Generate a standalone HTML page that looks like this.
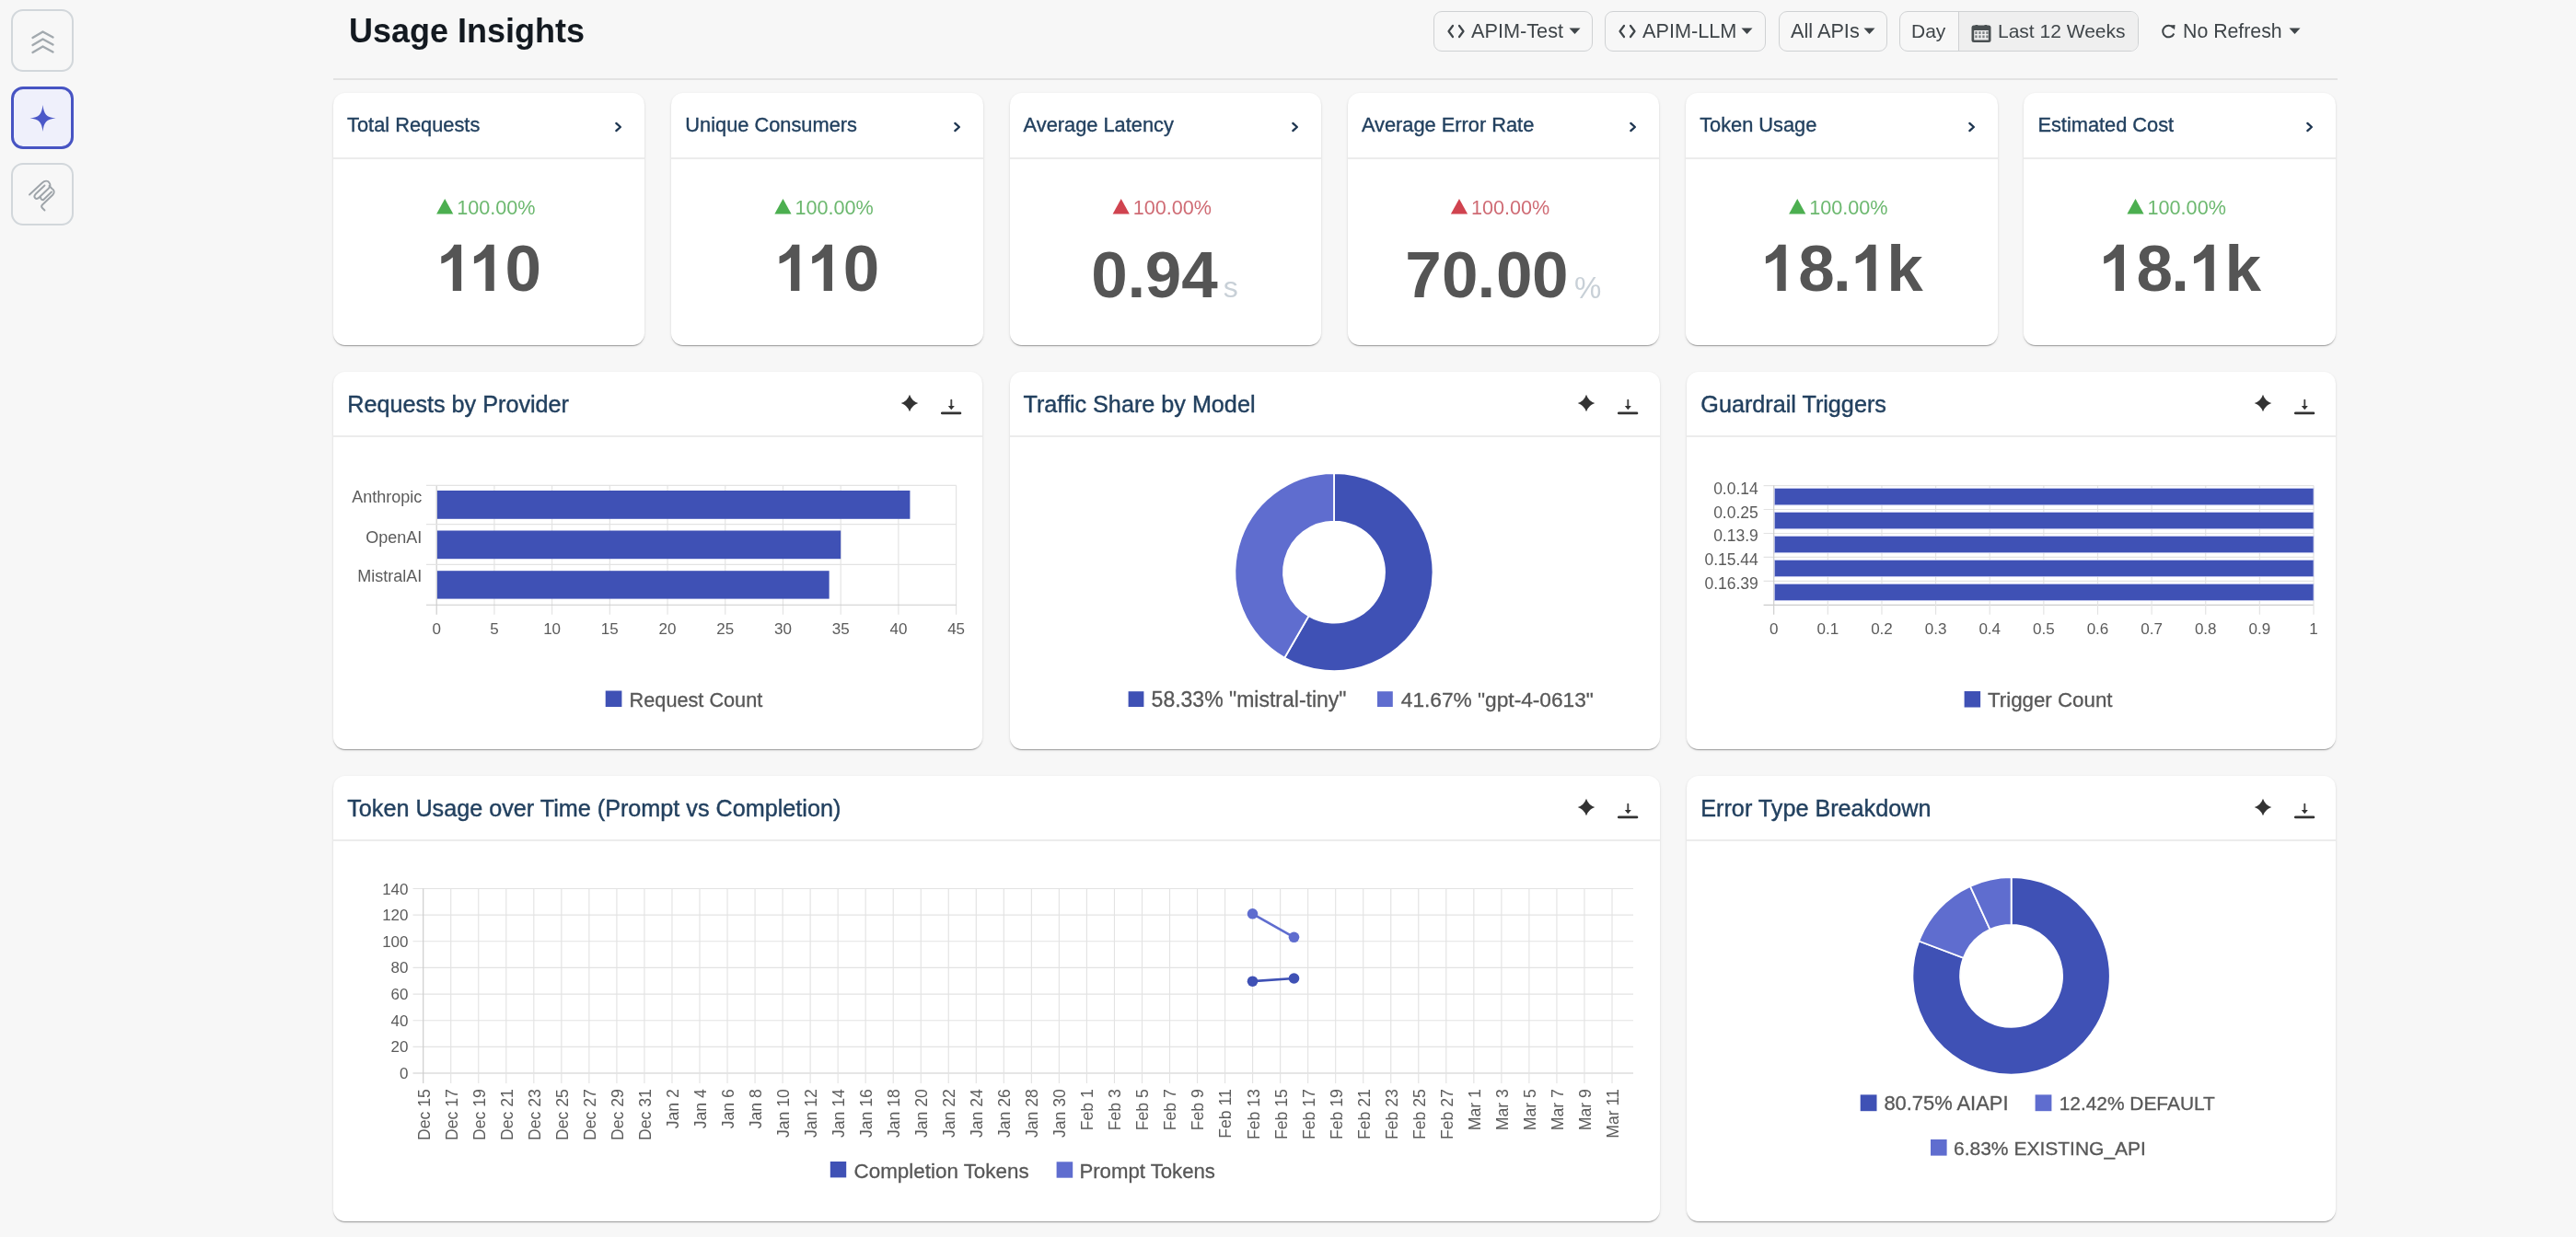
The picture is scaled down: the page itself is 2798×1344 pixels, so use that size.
<!DOCTYPE html><html><head><meta charset="utf-8"><style>
*{margin:0;padding:0;box-sizing:border-box}
html,body{width:2798px;height:1344px;overflow:hidden;background:#f7f7f7;font-family:"Liberation Sans", sans-serif}
.abs{position:absolute}
.sb{position:absolute;left:12px;width:68px;height:68px;border:2px solid #d2d7db;border-radius:13px}
.sb.act{border:3px solid #4754c3;background:#eff0fb}
.title{position:absolute;left:379px;top:9.5px;font-size:36px;font-weight:bold;color:#131920;line-height:48px;white-space:nowrap}
.hdiv{position:absolute;left:362.3px;top:84.8px;width:2176.3px;height:2px;background:#e3e3e3}
.fb{position:absolute;top:12px;height:44px;border:1.5px solid #cfd1d3;border-radius:9px;color:#3f4549;font-size:21px;line-height:41px;white-space:nowrap}
.card{position:absolute;background:#fff;border-radius:13px;box-shadow:0 2px 1px -1px rgba(0,0,0,0.2),0 1px 1px 0 rgba(0,0,0,0.14),0 1px 3px 0 rgba(0,0,0,0.12)}
.chd{position:absolute;left:0;right:0;height:2px;background:#ececec}
.kt{position:absolute;left:15px;font-size:21.8px;color:#22405f;-webkit-text-stroke:0.35px #22405f;white-space:nowrap;line-height:28px}
.ct{position:absolute;left:15px;font-size:25.2px;color:#22405f;-webkit-text-stroke:0.4px #22405f;white-space:nowrap;line-height:32px}
.num{position:absolute;font-weight:bold;color:#585858;white-space:nowrap}
.unit{color:#c9d1d8;font-weight:normal}
svg text{font-family:"Liberation Sans", sans-serif}
</style></head><body><div id="root" style="position:absolute;left:0;top:0;width:2798px;height:1344px;will-change:transform">
<div class="sb" style="top:10px"></div>
<div class="sb act" style="top:94px"></div>
<div class="sb" style="top:177px"></div>
<svg class="abs" style="left:0;top:0" width="100" height="260">
<g fill="none" stroke="#a2a9ae" stroke-width="2.4" stroke-linecap="round" stroke-linejoin="round">
<path d="M35.5 41 L46.5 34.5 L57.5 40.5"/>
<path d="M35.5 49 L46.5 42.5 L57.5 48.5"/>
<path d="M35.5 57 L46.5 50.5 L57.5 56.5"/>
</g>
<path d="M46.5 114 C47.6 124 50.5 127.6 60.5 128.6 C50.5 129.6 47.6 133 46.5 143 C45.4 133 42.5 129.6 32.5 128.6 C42.5 127.6 45.4 124 46.5 114 Z" fill="#4b58c8"/>
<g fill="none" stroke="#9ea4a9" stroke-width="1.9" stroke-linecap="round" stroke-linejoin="round">
<path d="M32 211.5 L46 198.5 C48.5 196 52 196 53.5 198.5 C55 200.5 54.5 203 52.5 205 L42.5 214.5 C41 216 39 216 38 215 C37 214 37.5 212 39 210.5 L48.5 201.5"/>
<path d="M53.5 202 L56.5 205 C59 206.5 59.5 209 57.5 211.5 L46 222.5 C45 223.5 45 225 46 226 L48.5 228.5"/>
<path d="M44 214 C44 216 45 217.2 47 217.2 L56 208.5"/>
</g>
</svg>
<div class="title">Usage Insights</div>
<div class="hdiv"></div>
<div class="fb" style="left:1557px;width:173px"></div>
<svg class="abs" style="left:1572px;top:26px" width="20" height="16"><path d="M6 2 L1.5 8 L6 14 M13 2 L17.5 8 L13 14" fill="none" stroke="#3f4549" stroke-width="2.2" stroke-linecap="round" stroke-linejoin="round"/></svg>
<div class="abs" style="left:1598px;top:12px;font-size:21.7px;color:#3f4549;line-height:44px">APIM-Test</div>
<svg class="abs" style="left:1704px;top:30px" width="14" height="8"><path d="M0.5 0.5 L12.5 0.5 L6.5 7 Z" fill="#3f4549"/></svg>
<div class="fb" style="left:1743px;width:175px"></div>
<svg class="abs" style="left:1758px;top:26px" width="20" height="16"><path d="M6 2 L1.5 8 L6 14 M13 2 L17.5 8 L13 14" fill="none" stroke="#3f4549" stroke-width="2.2" stroke-linecap="round" stroke-linejoin="round"/></svg>
<div class="abs" style="left:1784px;top:12px;font-size:21.7px;color:#3f4549;line-height:44px">APIM-LLM</div>
<svg class="abs" style="left:1891px;top:30px" width="14" height="8"><path d="M0.5 0.5 L12.5 0.5 L6.5 7 Z" fill="#3f4549"/></svg>
<div class="fb" style="left:1932px;width:118px"></div>
<div class="abs" style="left:1945px;top:12px;font-size:21.7px;color:#3f4549;line-height:44px">All APIs</div>
<svg class="abs" style="left:2024px;top:30px" width="14" height="8"><path d="M0.5 0.5 L12.5 0.5 L6.5 7 Z" fill="#3f4549"/></svg>
<div class="fb" style="left:2063px;width:260px;overflow:hidden"><div class="abs" style="left:63px;top:0;width:200px;height:44px;background:#efefef;border-left:1.5px solid #cfd1d3"></div></div>
<div class="abs" style="left:2076px;top:12px;font-size:21px;color:#3f4549;line-height:44px">Day</div>
<svg class="abs" style="left:2140px;top:24px" width="26" height="24">
<rect x="1.5" y="3.5" width="21" height="18.5" rx="2.5" fill="#4a5052"/>
<rect x="4.2" y="9" width="15.6" height="10.5" fill="#efefef"/>
<rect x="5.5" y="3" width="2.8" height="3" fill="#4a5052"/><rect x="15.5" y="3" width="2.8" height="3" fill="#4a5052"/>
<g fill="#7d8284"><rect x="5.3" y="10.2" width="2.3" height="2.8"/><rect x="9.3" y="10.2" width="2.3" height="2.8"/><rect x="13.3" y="10.2" width="2.3" height="2.8"/><rect x="17.3" y="10.2" width="2.3" height="2.8"/>
<rect x="5.3" y="14.4" width="2.3" height="2.8"/><rect x="9.3" y="14.4" width="2.3" height="2.8"/><rect x="13.3" y="14.4" width="2.3" height="2.8"/><rect x="17.3" y="14.4" width="2.3" height="2.8"/></g>
</svg>
<div class="abs" style="left:2170px;top:12px;font-size:21px;color:#3f4549;line-height:44px">Last 12 Weeks</div>
<svg class="abs" style="left:2346px;top:24px" width="20" height="20">
<path d="M14.5 6.2 A6.3 6.3 0 1 0 15.3 12.5" fill="none" stroke="#3f4549" stroke-width="2"/>
<path d="M11.5 3.5 L16.5 3 L16 8.5 Z" fill="#3f4549"/>
</svg>
<div class="abs" style="left:2371px;top:12px;font-size:21.3px;color:#3f4549;line-height:44px">No Refresh</div>
<svg class="abs" style="left:2486px;top:30px" width="14" height="8"><path d="M0.5 0.5 L12.5 0.5 L6.5 7 Z" fill="#3f4549"/></svg>
<div class="card" style="left:362.10px;top:101px;width:338.4px;height:274px">
<div class="chd" style="top:70px"></div>
<div class="kt" style="top:21px">Total Requests</div>
<svg class="abs" style="left:304.4px;top:30px" width="12" height="14"><path d="M3.3 2.9 L7.9 7 L3.3 11.1" fill="none" stroke="#1d3550" stroke-width="2.3" stroke-linecap="round" stroke-linejoin="round"/></svg>
</div>
<div class="card" style="left:729.36px;top:101px;width:338.4px;height:274px">
<div class="chd" style="top:70px"></div>
<div class="kt" style="top:21px">Unique Consumers</div>
<svg class="abs" style="left:304.4px;top:30px" width="12" height="14"><path d="M3.3 2.9 L7.9 7 L3.3 11.1" fill="none" stroke="#1d3550" stroke-width="2.3" stroke-linecap="round" stroke-linejoin="round"/></svg>
</div>
<div class="card" style="left:1096.62px;top:101px;width:338.4px;height:274px">
<div class="chd" style="top:70px"></div>
<div class="kt" style="top:21px">Average Latency</div>
<svg class="abs" style="left:304.4px;top:30px" width="12" height="14"><path d="M3.3 2.9 L7.9 7 L3.3 11.1" fill="none" stroke="#1d3550" stroke-width="2.3" stroke-linecap="round" stroke-linejoin="round"/></svg>
</div>
<div class="card" style="left:1463.88px;top:101px;width:338.4px;height:274px">
<div class="chd" style="top:70px"></div>
<div class="kt" style="top:21px">Average Error Rate</div>
<svg class="abs" style="left:304.4px;top:30px" width="12" height="14"><path d="M3.3 2.9 L7.9 7 L3.3 11.1" fill="none" stroke="#1d3550" stroke-width="2.3" stroke-linecap="round" stroke-linejoin="round"/></svg>
</div>
<div class="card" style="left:1831.14px;top:101px;width:338.4px;height:274px">
<div class="chd" style="top:70px"></div>
<div class="kt" style="top:21px">Token Usage</div>
<svg class="abs" style="left:304.4px;top:30px" width="12" height="14"><path d="M3.3 2.9 L7.9 7 L3.3 11.1" fill="none" stroke="#1d3550" stroke-width="2.3" stroke-linecap="round" stroke-linejoin="round"/></svg>
</div>
<div class="card" style="left:2198.40px;top:101px;width:338.4px;height:274px">
<div class="chd" style="top:70px"></div>
<div class="kt" style="top:21px">Estimated Cost</div>
<svg class="abs" style="left:304.4px;top:30px" width="12" height="14"><path d="M3.3 2.9 L7.9 7 L3.3 11.1" fill="none" stroke="#1d3550" stroke-width="2.3" stroke-linecap="round" stroke-linejoin="round"/></svg>
</div>
<div class="card" style="left:362.20px;top:403.8px;width:705.30px;height:410px">
<div class="chd" style="top:69px"></div>
<div class="ct" style="top:19px">Requests by Provider</div>
<svg class="abs" style="left:613.8px;top:22.700000000000003px" width="24" height="24"><path d="M12 2.6999999999999993 Q14.3 9.7 21.3 12 Q14.3 14.3 12 21.3 Q9.7 14.3 2.6999999999999993 12 Q9.7 9.7 12 2.6999999999999993 Z" fill="#333"/></svg>
<svg class="abs" style="left:659.8px;top:28.5px" width="24" height="20"><path d="M11.3 2.8 L11.3 9.5" stroke="#444" stroke-width="1.9" fill="none" stroke-linecap="round"/><path d="M7.8 9 L14.8 9 L11.3 13.2 Z" fill="#333"/><path d="M1.3 16.9 L20.9 16.9" stroke="#333" stroke-width="2.8" fill="none" stroke-linecap="round"/></svg>
</div>
<div class="card" style="left:1096.50px;top:403.8px;width:706.30px;height:410px">
<div class="chd" style="top:69px"></div>
<div class="ct" style="top:19px">Traffic Share by Model</div>
<svg class="abs" style="left:614.8px;top:22.700000000000003px" width="24" height="24"><path d="M12 2.6999999999999993 Q14.3 9.7 21.3 12 Q14.3 14.3 12 21.3 Q9.7 14.3 2.6999999999999993 12 Q9.7 9.7 12 2.6999999999999993 Z" fill="#333"/></svg>
<svg class="abs" style="left:660.8px;top:28.5px" width="24" height="20"><path d="M11.3 2.8 L11.3 9.5" stroke="#444" stroke-width="1.9" fill="none" stroke-linecap="round"/><path d="M7.8 9 L14.8 9 L11.3 13.2 Z" fill="#333"/><path d="M1.3 16.9 L20.9 16.9" stroke="#333" stroke-width="2.8" fill="none" stroke-linecap="round"/></svg>
</div>
<div class="card" style="left:1832.30px;top:403.8px;width:705.20px;height:410px">
<div class="chd" style="top:69px"></div>
<div class="ct" style="top:19px">Guardrail Triggers</div>
<svg class="abs" style="left:613.7px;top:22.700000000000003px" width="24" height="24"><path d="M12 2.6999999999999993 Q14.3 9.7 21.3 12 Q14.3 14.3 12 21.3 Q9.7 14.3 2.6999999999999993 12 Q9.7 9.7 12 2.6999999999999993 Z" fill="#333"/></svg>
<svg class="abs" style="left:659.7px;top:28.5px" width="24" height="20"><path d="M11.3 2.8 L11.3 9.5" stroke="#444" stroke-width="1.9" fill="none" stroke-linecap="round"/><path d="M7.8 9 L14.8 9 L11.3 13.2 Z" fill="#333"/><path d="M1.3 16.9 L20.9 16.9" stroke="#333" stroke-width="2.8" fill="none" stroke-linecap="round"/></svg>
</div>
<div class="card" style="left:362.20px;top:842.6px;width:1440.50px;height:484.2px">
<div class="chd" style="top:69px"></div>
<div class="ct" style="top:19px">Token Usage over Time (Prompt vs Completion)</div>
<svg class="abs" style="left:1349.0px;top:22.700000000000003px" width="24" height="24"><path d="M12 2.6999999999999993 Q14.3 9.7 21.3 12 Q14.3 14.3 12 21.3 Q9.7 14.3 2.6999999999999993 12 Q9.7 9.7 12 2.6999999999999993 Z" fill="#333"/></svg>
<svg class="abs" style="left:1395.0px;top:28.5px" width="24" height="20"><path d="M11.3 2.8 L11.3 9.5" stroke="#444" stroke-width="1.9" fill="none" stroke-linecap="round"/><path d="M7.8 9 L14.8 9 L11.3 13.2 Z" fill="#333"/><path d="M1.3 16.9 L20.9 16.9" stroke="#333" stroke-width="2.8" fill="none" stroke-linecap="round"/></svg>
</div>
<div class="card" style="left:1832.30px;top:842.6px;width:705.20px;height:484.2px">
<div class="chd" style="top:69px"></div>
<div class="ct" style="top:19px">Error Type Breakdown</div>
<svg class="abs" style="left:613.7px;top:22.700000000000003px" width="24" height="24"><path d="M12 2.6999999999999993 Q14.3 9.7 21.3 12 Q14.3 14.3 12 21.3 Q9.7 14.3 2.6999999999999993 12 Q9.7 9.7 12 2.6999999999999993 Z" fill="#333"/></svg>
<svg class="abs" style="left:659.7px;top:28.5px" width="24" height="20"><path d="M11.3 2.8 L11.3 9.5" stroke="#444" stroke-width="1.9" fill="none" stroke-linecap="round"/><path d="M7.8 9 L14.8 9 L11.3 13.2 Z" fill="#333"/><path d="M1.3 16.9 L20.9 16.9" stroke="#333" stroke-width="2.8" fill="none" stroke-linecap="round"/></svg>
</div>
<svg class="abs" style="left:0;top:0" width="2798" height="400"><path transform="translate(491.80 265.70)" d="M1.4 0 L9.3 0 L9.3 50.3 L0 50.3 L0 13.8 C-3.5 17 -8 19.8 -12.5 20.9 L-12.5 12.7 C-6 10.5 -1 5.5 1.4 0 Z" fill="#555555"/><path transform="translate(527.40 265.70)" d="M1.4 0 L9.3 0 L9.3 50.3 L0 50.3 L0 13.8 C-3.5 17 -8 19.8 -12.5 20.9 L-12.5 12.7 C-6 10.5 -1 5.5 1.4 0 Z" fill="#555555"/><text x="548.39" y="316" font-size="71" font-weight="bold" fill="#555555">0</text><path transform="translate(859.06 265.70)" d="M1.4 0 L9.3 0 L9.3 50.3 L0 50.3 L0 13.8 C-3.5 17 -8 19.8 -12.5 20.9 L-12.5 12.7 C-6 10.5 -1 5.5 1.4 0 Z" fill="#555555"/><path transform="translate(894.66 265.70)" d="M1.4 0 L9.3 0 L9.3 50.3 L0 50.3 L0 13.8 C-3.5 17 -8 19.8 -12.5 20.9 L-12.5 12.7 C-6 10.5 -1 5.5 1.4 0 Z" fill="#555555"/><text x="915.65" y="316" font-size="71" font-weight="bold" fill="#555555">0</text><text x="1185.29 1224.58 1243.84 1283.23" y="323.3" font-size="71" font-weight="bold" fill="#555555">0.94</text><text x="1328.7" y="322.7" font-size="32" fill="#c8d0d7">s</text><text x="1526.25 1566.09 1604.48 1625.09 1663.89" y="323.3" font-size="71" font-weight="bold" fill="#555555">70.00</text><text x="1709.9" y="323.5" font-size="33" fill="#c8d0d7">%</text><path transform="translate(1930.40 265.70)" d="M1.4 0 L9.3 0 L9.3 50.3 L0 50.3 L0 13.8 C-3.5 17 -8 19.8 -12.5 20.9 L-12.5 12.7 C-6 10.5 -1 5.5 1.4 0 Z" fill="#555555"/><path transform="translate(2028.20 265.70)" d="M1.4 0 L9.3 0 L9.3 50.3 L0 50.3 L0 13.8 C-3.5 17 -8 19.8 -12.5 20.9 L-12.5 12.7 C-6 10.5 -1 5.5 1.4 0 Z" fill="#555555"/><text x="1953.25 1991.08 2049.14" y="316" font-size="71" font-weight="bold" fill="#555555">8.k</text><path transform="translate(2297.66 265.70)" d="M1.4 0 L9.3 0 L9.3 50.3 L0 50.3 L0 13.8 C-3.5 17 -8 19.8 -12.5 20.9 L-12.5 12.7 C-6 10.5 -1 5.5 1.4 0 Z" fill="#555555"/><path transform="translate(2395.46 265.70)" d="M1.4 0 L9.3 0 L9.3 50.3 L0 50.3 L0 13.8 C-3.5 17 -8 19.8 -12.5 20.9 L-12.5 12.7 C-6 10.5 -1 5.5 1.4 0 Z" fill="#555555"/><text x="2320.51 2358.34 2416.40" y="316" font-size="71" font-weight="bold" fill="#555555">8.k</text><path d="M483.20 216 L492.30 232.6 L474.10 232.6 Z" fill="#4caf50"/><text x="496.30" y="233" font-size="21.6" fill="#6cb86f">100.00%</text><path d="M850.46 216 L859.56 232.6 L841.36 232.6 Z" fill="#4caf50"/><text x="863.56" y="233" font-size="21.6" fill="#6cb86f">100.00%</text><path d="M1217.72 216 L1226.82 232.6 L1208.62 232.6 Z" fill="#d0434f"/><text x="1230.82" y="233" font-size="21.6" fill="#cf6b74">100.00%</text><path d="M1584.98 216 L1594.08 232.6 L1575.88 232.6 Z" fill="#d0434f"/><text x="1598.08" y="233" font-size="21.6" fill="#cf6b74">100.00%</text><path d="M1952.24 216 L1961.34 232.6 L1943.14 232.6 Z" fill="#4caf50"/><text x="1965.34" y="233" font-size="21.6" fill="#6cb86f">100.00%</text><path d="M2319.50 216 L2328.60 232.6 L2310.40 232.6 Z" fill="#4caf50"/><text x="2332.60" y="233" font-size="21.6" fill="#6cb86f">100.00%</text></svg>
<svg class="abs" style="left:0;top:0" width="2798" height="1344"><line x1="474.20" y1="527.3" x2="474.20" y2="667.7" stroke="#cccccc" stroke-width="1.15"/><line x1="536.91" y1="527.3" x2="536.91" y2="667.7" stroke="#e3e3e3" stroke-width="1.15"/><line x1="599.62" y1="527.3" x2="599.62" y2="667.7" stroke="#e3e3e3" stroke-width="1.15"/><line x1="662.33" y1="527.3" x2="662.33" y2="667.7" stroke="#e3e3e3" stroke-width="1.15"/><line x1="725.04" y1="527.3" x2="725.04" y2="667.7" stroke="#e3e3e3" stroke-width="1.15"/><line x1="787.76" y1="527.3" x2="787.76" y2="667.7" stroke="#e3e3e3" stroke-width="1.15"/><line x1="850.47" y1="527.3" x2="850.47" y2="667.7" stroke="#e3e3e3" stroke-width="1.15"/><line x1="913.18" y1="527.3" x2="913.18" y2="667.7" stroke="#e3e3e3" stroke-width="1.15"/><line x1="975.89" y1="527.3" x2="975.89" y2="667.7" stroke="#e3e3e3" stroke-width="1.15"/><line x1="1038.60" y1="527.3" x2="1038.60" y2="667.7" stroke="#e3e3e3" stroke-width="1.15"/><line x1="463" y1="527.3" x2="1038.6" y2="527.3" stroke="#e3e3e3" stroke-width="1.15"/><line x1="463" y1="569.6" x2="1038.6" y2="569.6" stroke="#e3e3e3" stroke-width="1.15"/><line x1="463" y1="613.4" x2="1038.6" y2="613.4" stroke="#e3e3e3" stroke-width="1.15"/><line x1="463" y1="657.2" x2="1038.6" y2="657.2" stroke="#cccccc" stroke-width="1.15"/><rect x="474.9" y="533.0" width="513.53" height="30.80" fill="#3f51b5"/><text x="458.3" y="545.6" font-size="18" fill="#5b5b5b" text-anchor="end">Anthropic</text><rect x="474.9" y="576.5" width="438.28" height="30.70" fill="#3f51b5"/><text x="458.3" y="589.5" font-size="18" fill="#5b5b5b" text-anchor="end">OpenAI</text><rect x="474.9" y="620.2" width="425.74" height="30.40" fill="#3f51b5"/><text x="458.3" y="632" font-size="18" fill="#5b5b5b" text-anchor="end">MistralAI</text><text x="474.20" y="688.9" font-size="17" fill="#5b5b5b" text-anchor="middle">0</text><text x="536.91" y="688.9" font-size="17" fill="#5b5b5b" text-anchor="middle">5</text><text x="599.62" y="688.9" font-size="17" fill="#5b5b5b" text-anchor="middle">10</text><text x="662.33" y="688.9" font-size="17" fill="#5b5b5b" text-anchor="middle">15</text><text x="725.04" y="688.9" font-size="17" fill="#5b5b5b" text-anchor="middle">20</text><text x="787.76" y="688.9" font-size="17" fill="#5b5b5b" text-anchor="middle">25</text><text x="850.47" y="688.9" font-size="17" fill="#5b5b5b" text-anchor="middle">30</text><text x="913.18" y="688.9" font-size="17" fill="#5b5b5b" text-anchor="middle">35</text><text x="975.89" y="688.9" font-size="17" fill="#5b5b5b" text-anchor="middle">40</text><text x="1038.60" y="688.9" font-size="17" fill="#5b5b5b" text-anchor="middle">45</text><rect x="657.7" y="750.5" width="17.7" height="17.5" fill="#3f51b5"/><text x="683.6" y="767.9" font-size="21.7" fill="#575757" stroke="#575757" stroke-width="0.3">Request Count</text><path d="M1449.00 514.10 A107.5 107.5 0 1 1 1395.27 714.71 L1421.51 669.24 A55 55 0 1 0 1449.00 566.60 Z" fill="#3f51b5" stroke="#fff" stroke-width="1.8" stroke-linejoin="miter"/><path d="M1395.27 714.71 A107.5 107.5 0 0 1 1449.00 514.10 L1449.00 566.60 A55 55 0 0 0 1421.51 669.24 Z" fill="#5f6dcf" stroke="#fff" stroke-width="1.8" stroke-linejoin="miter"/><rect x="1225.6" y="751.2" width="16.8" height="16.8" fill="#3f51b5"/><text x="1250.6" y="767.9" font-size="23" fill="#575757" stroke="#575757" stroke-width="0.3">58.33% "mistral-tiny"</text><rect x="1496" y="751.2" width="16.8" height="16.8" fill="#5f6dcf"/><text x="1521.8" y="767.9" font-size="22.7" fill="#575757" stroke="#575757" stroke-width="0.3">41.67% "gpt-4-0613"</text><line x1="1915.6" y1="527.60" x2="2513" y2="527.60" stroke="#e3e3e3" stroke-width="1.15"/><line x1="1915.6" y1="553.54" x2="2513" y2="553.54" stroke="#e3e3e3" stroke-width="1.15"/><line x1="1915.6" y1="579.48" x2="2513" y2="579.48" stroke="#e3e3e3" stroke-width="1.15"/><line x1="1915.6" y1="605.42" x2="2513" y2="605.42" stroke="#e3e3e3" stroke-width="1.15"/><line x1="1915.6" y1="631.36" x2="2513" y2="631.36" stroke="#e3e3e3" stroke-width="1.15"/><line x1="1915.6" y1="657.30" x2="2513" y2="657.30" stroke="#cccccc" stroke-width="1.15"/><line x1="1926.70" y1="527.6" x2="1926.70" y2="667.8" stroke="#cccccc" stroke-width="1.15"/><line x1="1985.33" y1="527.6" x2="1985.33" y2="667.8" stroke="#e3e3e3" stroke-width="1.15"/><line x1="2043.96" y1="527.6" x2="2043.96" y2="667.8" stroke="#e3e3e3" stroke-width="1.15"/><line x1="2102.59" y1="527.6" x2="2102.59" y2="667.8" stroke="#e3e3e3" stroke-width="1.15"/><line x1="2161.22" y1="527.6" x2="2161.22" y2="667.8" stroke="#e3e3e3" stroke-width="1.15"/><line x1="2219.85" y1="527.6" x2="2219.85" y2="667.8" stroke="#e3e3e3" stroke-width="1.15"/><line x1="2278.48" y1="527.6" x2="2278.48" y2="667.8" stroke="#e3e3e3" stroke-width="1.15"/><line x1="2337.11" y1="527.6" x2="2337.11" y2="667.8" stroke="#e3e3e3" stroke-width="1.15"/><line x1="2395.74" y1="527.6" x2="2395.74" y2="667.8" stroke="#e3e3e3" stroke-width="1.15"/><line x1="2454.37" y1="527.6" x2="2454.37" y2="667.8" stroke="#e3e3e3" stroke-width="1.15"/><line x1="2513.00" y1="527.6" x2="2513.00" y2="667.8" stroke="#e3e3e3" stroke-width="1.15"/><rect x="1927.3" y="530.60" width="585.70" height="18.2" fill="#3f51b5" stroke="#c9cdf0" stroke-width="0.8"/><text x="1909.8" y="536.60" font-size="17.5" fill="#5b5b5b" text-anchor="end">0.0.14</text><rect x="1927.3" y="556.54" width="585.70" height="18.2" fill="#3f51b5" stroke="#c9cdf0" stroke-width="0.8"/><text x="1909.8" y="562.54" font-size="17.5" fill="#5b5b5b" text-anchor="end">0.0.25</text><rect x="1927.3" y="582.48" width="585.70" height="18.2" fill="#3f51b5" stroke="#c9cdf0" stroke-width="0.8"/><text x="1909.8" y="588.48" font-size="17.5" fill="#5b5b5b" text-anchor="end">0.13.9</text><rect x="1927.3" y="608.42" width="585.70" height="18.2" fill="#3f51b5" stroke="#c9cdf0" stroke-width="0.8"/><text x="1909.8" y="614.42" font-size="17.5" fill="#5b5b5b" text-anchor="end">0.15.44</text><rect x="1927.3" y="634.36" width="585.70" height="18.2" fill="#3f51b5" stroke="#c9cdf0" stroke-width="0.8"/><text x="1909.8" y="640.36" font-size="17.5" fill="#5b5b5b" text-anchor="end">0.16.39</text><text x="1926.70" y="689" font-size="17" fill="#5b5b5b" text-anchor="middle">0</text><text x="1985.33" y="689" font-size="17" fill="#5b5b5b" text-anchor="middle">0.1</text><text x="2043.96" y="689" font-size="17" fill="#5b5b5b" text-anchor="middle">0.2</text><text x="2102.59" y="689" font-size="17" fill="#5b5b5b" text-anchor="middle">0.3</text><text x="2161.22" y="689" font-size="17" fill="#5b5b5b" text-anchor="middle">0.4</text><text x="2219.85" y="689" font-size="17" fill="#5b5b5b" text-anchor="middle">0.5</text><text x="2278.48" y="689" font-size="17" fill="#5b5b5b" text-anchor="middle">0.6</text><text x="2337.11" y="689" font-size="17" fill="#5b5b5b" text-anchor="middle">0.7</text><text x="2395.74" y="689" font-size="17" fill="#5b5b5b" text-anchor="middle">0.8</text><text x="2454.37" y="689" font-size="17" fill="#5b5b5b" text-anchor="middle">0.9</text><text x="2513.00" y="689" font-size="17" fill="#5b5b5b" text-anchor="middle">1</text><rect x="2133.6" y="751" width="17.5" height="17.5" fill="#3f51b5"/><text x="2159" y="768" font-size="22.3" fill="#575757" stroke="#575757" stroke-width="0.3">Trigger Count</text><line x1="448.5" y1="965.50" x2="1774" y2="965.50" stroke="#e3e3e3" stroke-width="1.15"/><text x="443.5" y="971.50" font-size="17" fill="#5b5b5b" text-anchor="end">140</text><line x1="448.5" y1="994.14" x2="1774" y2="994.14" stroke="#e3e3e3" stroke-width="1.15"/><text x="443.5" y="1000.14" font-size="17" fill="#5b5b5b" text-anchor="end">120</text><line x1="448.5" y1="1022.79" x2="1774" y2="1022.79" stroke="#e3e3e3" stroke-width="1.15"/><text x="443.5" y="1028.79" font-size="17" fill="#5b5b5b" text-anchor="end">100</text><line x1="448.5" y1="1051.43" x2="1774" y2="1051.43" stroke="#e3e3e3" stroke-width="1.15"/><text x="443.5" y="1057.43" font-size="17" fill="#5b5b5b" text-anchor="end">80</text><line x1="448.5" y1="1080.07" x2="1774" y2="1080.07" stroke="#e3e3e3" stroke-width="1.15"/><text x="443.5" y="1086.07" font-size="17" fill="#5b5b5b" text-anchor="end">60</text><line x1="448.5" y1="1108.71" x2="1774" y2="1108.71" stroke="#e3e3e3" stroke-width="1.15"/><text x="443.5" y="1114.71" font-size="17" fill="#5b5b5b" text-anchor="end">40</text><line x1="448.5" y1="1137.36" x2="1774" y2="1137.36" stroke="#e3e3e3" stroke-width="1.15"/><text x="443.5" y="1143.36" font-size="17" fill="#5b5b5b" text-anchor="end">20</text><line x1="448.5" y1="1166.00" x2="1774" y2="1166.00" stroke="#cccccc" stroke-width="1.15"/><text x="443.5" y="1172.00" font-size="17" fill="#5b5b5b" text-anchor="end">0</text><line x1="459.70" y1="965.5" x2="459.70" y2="1177" stroke="#cccccc" stroke-width="1.15"/><text transform="translate(466.60 1183.2) rotate(-90)" font-size="17.6" fill="#5b5b5b" text-anchor="end">Dec 15</text><line x1="489.73" y1="965.5" x2="489.73" y2="1177" stroke="#e3e3e3" stroke-width="1.15"/><text transform="translate(496.63 1183.2) rotate(-90)" font-size="17.6" fill="#5b5b5b" text-anchor="end">Dec 17</text><line x1="519.76" y1="965.5" x2="519.76" y2="1177" stroke="#e3e3e3" stroke-width="1.15"/><text transform="translate(526.66 1183.2) rotate(-90)" font-size="17.6" fill="#5b5b5b" text-anchor="end">Dec 19</text><line x1="549.79" y1="965.5" x2="549.79" y2="1177" stroke="#e3e3e3" stroke-width="1.15"/><text transform="translate(556.69 1183.2) rotate(-90)" font-size="17.6" fill="#5b5b5b" text-anchor="end">Dec 21</text><line x1="579.82" y1="965.5" x2="579.82" y2="1177" stroke="#e3e3e3" stroke-width="1.15"/><text transform="translate(586.72 1183.2) rotate(-90)" font-size="17.6" fill="#5b5b5b" text-anchor="end">Dec 23</text><line x1="609.85" y1="965.5" x2="609.85" y2="1177" stroke="#e3e3e3" stroke-width="1.15"/><text transform="translate(616.75 1183.2) rotate(-90)" font-size="17.6" fill="#5b5b5b" text-anchor="end">Dec 25</text><line x1="639.88" y1="965.5" x2="639.88" y2="1177" stroke="#e3e3e3" stroke-width="1.15"/><text transform="translate(646.78 1183.2) rotate(-90)" font-size="17.6" fill="#5b5b5b" text-anchor="end">Dec 27</text><line x1="669.91" y1="965.5" x2="669.91" y2="1177" stroke="#e3e3e3" stroke-width="1.15"/><text transform="translate(676.81 1183.2) rotate(-90)" font-size="17.6" fill="#5b5b5b" text-anchor="end">Dec 29</text><line x1="699.94" y1="965.5" x2="699.94" y2="1177" stroke="#e3e3e3" stroke-width="1.15"/><text transform="translate(706.84 1183.2) rotate(-90)" font-size="17.6" fill="#5b5b5b" text-anchor="end">Dec 31</text><line x1="729.97" y1="965.5" x2="729.97" y2="1177" stroke="#e3e3e3" stroke-width="1.15"/><text transform="translate(736.87 1183.2) rotate(-90)" font-size="17.6" fill="#5b5b5b" text-anchor="end">Jan 2</text><line x1="760.00" y1="965.5" x2="760.00" y2="1177" stroke="#e3e3e3" stroke-width="1.15"/><text transform="translate(766.90 1183.2) rotate(-90)" font-size="17.6" fill="#5b5b5b" text-anchor="end">Jan 4</text><line x1="790.03" y1="965.5" x2="790.03" y2="1177" stroke="#e3e3e3" stroke-width="1.15"/><text transform="translate(796.93 1183.2) rotate(-90)" font-size="17.6" fill="#5b5b5b" text-anchor="end">Jan 6</text><line x1="820.06" y1="965.5" x2="820.06" y2="1177" stroke="#e3e3e3" stroke-width="1.15"/><text transform="translate(826.96 1183.2) rotate(-90)" font-size="17.6" fill="#5b5b5b" text-anchor="end">Jan 8</text><line x1="850.09" y1="965.5" x2="850.09" y2="1177" stroke="#e3e3e3" stroke-width="1.15"/><text transform="translate(856.99 1183.2) rotate(-90)" font-size="17.6" fill="#5b5b5b" text-anchor="end">Jan 10</text><line x1="880.12" y1="965.5" x2="880.12" y2="1177" stroke="#e3e3e3" stroke-width="1.15"/><text transform="translate(887.02 1183.2) rotate(-90)" font-size="17.6" fill="#5b5b5b" text-anchor="end">Jan 12</text><line x1="910.15" y1="965.5" x2="910.15" y2="1177" stroke="#e3e3e3" stroke-width="1.15"/><text transform="translate(917.05 1183.2) rotate(-90)" font-size="17.6" fill="#5b5b5b" text-anchor="end">Jan 14</text><line x1="940.18" y1="965.5" x2="940.18" y2="1177" stroke="#e3e3e3" stroke-width="1.15"/><text transform="translate(947.08 1183.2) rotate(-90)" font-size="17.6" fill="#5b5b5b" text-anchor="end">Jan 16</text><line x1="970.21" y1="965.5" x2="970.21" y2="1177" stroke="#e3e3e3" stroke-width="1.15"/><text transform="translate(977.11 1183.2) rotate(-90)" font-size="17.6" fill="#5b5b5b" text-anchor="end">Jan 18</text><line x1="1000.24" y1="965.5" x2="1000.24" y2="1177" stroke="#e3e3e3" stroke-width="1.15"/><text transform="translate(1007.14 1183.2) rotate(-90)" font-size="17.6" fill="#5b5b5b" text-anchor="end">Jan 20</text><line x1="1030.27" y1="965.5" x2="1030.27" y2="1177" stroke="#e3e3e3" stroke-width="1.15"/><text transform="translate(1037.17 1183.2) rotate(-90)" font-size="17.6" fill="#5b5b5b" text-anchor="end">Jan 22</text><line x1="1060.30" y1="965.5" x2="1060.30" y2="1177" stroke="#e3e3e3" stroke-width="1.15"/><text transform="translate(1067.20 1183.2) rotate(-90)" font-size="17.6" fill="#5b5b5b" text-anchor="end">Jan 24</text><line x1="1090.33" y1="965.5" x2="1090.33" y2="1177" stroke="#e3e3e3" stroke-width="1.15"/><text transform="translate(1097.23 1183.2) rotate(-90)" font-size="17.6" fill="#5b5b5b" text-anchor="end">Jan 26</text><line x1="1120.36" y1="965.5" x2="1120.36" y2="1177" stroke="#e3e3e3" stroke-width="1.15"/><text transform="translate(1127.26 1183.2) rotate(-90)" font-size="17.6" fill="#5b5b5b" text-anchor="end">Jan 28</text><line x1="1150.39" y1="965.5" x2="1150.39" y2="1177" stroke="#e3e3e3" stroke-width="1.15"/><text transform="translate(1157.29 1183.2) rotate(-90)" font-size="17.6" fill="#5b5b5b" text-anchor="end">Jan 30</text><line x1="1180.42" y1="965.5" x2="1180.42" y2="1177" stroke="#e3e3e3" stroke-width="1.15"/><text transform="translate(1187.32 1183.2) rotate(-90)" font-size="17.6" fill="#5b5b5b" text-anchor="end">Feb 1</text><line x1="1210.45" y1="965.5" x2="1210.45" y2="1177" stroke="#e3e3e3" stroke-width="1.15"/><text transform="translate(1217.35 1183.2) rotate(-90)" font-size="17.6" fill="#5b5b5b" text-anchor="end">Feb 3</text><line x1="1240.48" y1="965.5" x2="1240.48" y2="1177" stroke="#e3e3e3" stroke-width="1.15"/><text transform="translate(1247.38 1183.2) rotate(-90)" font-size="17.6" fill="#5b5b5b" text-anchor="end">Feb 5</text><line x1="1270.51" y1="965.5" x2="1270.51" y2="1177" stroke="#e3e3e3" stroke-width="1.15"/><text transform="translate(1277.41 1183.2) rotate(-90)" font-size="17.6" fill="#5b5b5b" text-anchor="end">Feb 7</text><line x1="1300.54" y1="965.5" x2="1300.54" y2="1177" stroke="#e3e3e3" stroke-width="1.15"/><text transform="translate(1307.44 1183.2) rotate(-90)" font-size="17.6" fill="#5b5b5b" text-anchor="end">Feb 9</text><line x1="1330.57" y1="965.5" x2="1330.57" y2="1177" stroke="#e3e3e3" stroke-width="1.15"/><text transform="translate(1337.47 1183.2) rotate(-90)" font-size="17.6" fill="#5b5b5b" text-anchor="end">Feb 11</text><line x1="1360.60" y1="965.5" x2="1360.60" y2="1177" stroke="#e3e3e3" stroke-width="1.15"/><text transform="translate(1367.50 1183.2) rotate(-90)" font-size="17.6" fill="#5b5b5b" text-anchor="end">Feb 13</text><line x1="1390.63" y1="965.5" x2="1390.63" y2="1177" stroke="#e3e3e3" stroke-width="1.15"/><text transform="translate(1397.53 1183.2) rotate(-90)" font-size="17.6" fill="#5b5b5b" text-anchor="end">Feb 15</text><line x1="1420.66" y1="965.5" x2="1420.66" y2="1177" stroke="#e3e3e3" stroke-width="1.15"/><text transform="translate(1427.56 1183.2) rotate(-90)" font-size="17.6" fill="#5b5b5b" text-anchor="end">Feb 17</text><line x1="1450.69" y1="965.5" x2="1450.69" y2="1177" stroke="#e3e3e3" stroke-width="1.15"/><text transform="translate(1457.59 1183.2) rotate(-90)" font-size="17.6" fill="#5b5b5b" text-anchor="end">Feb 19</text><line x1="1480.72" y1="965.5" x2="1480.72" y2="1177" stroke="#e3e3e3" stroke-width="1.15"/><text transform="translate(1487.62 1183.2) rotate(-90)" font-size="17.6" fill="#5b5b5b" text-anchor="end">Feb 21</text><line x1="1510.75" y1="965.5" x2="1510.75" y2="1177" stroke="#e3e3e3" stroke-width="1.15"/><text transform="translate(1517.65 1183.2) rotate(-90)" font-size="17.6" fill="#5b5b5b" text-anchor="end">Feb 23</text><line x1="1540.78" y1="965.5" x2="1540.78" y2="1177" stroke="#e3e3e3" stroke-width="1.15"/><text transform="translate(1547.68 1183.2) rotate(-90)" font-size="17.6" fill="#5b5b5b" text-anchor="end">Feb 25</text><line x1="1570.81" y1="965.5" x2="1570.81" y2="1177" stroke="#e3e3e3" stroke-width="1.15"/><text transform="translate(1577.71 1183.2) rotate(-90)" font-size="17.6" fill="#5b5b5b" text-anchor="end">Feb 27</text><line x1="1600.84" y1="965.5" x2="1600.84" y2="1177" stroke="#e3e3e3" stroke-width="1.15"/><text transform="translate(1607.74 1183.2) rotate(-90)" font-size="17.6" fill="#5b5b5b" text-anchor="end">Mar 1</text><line x1="1630.87" y1="965.5" x2="1630.87" y2="1177" stroke="#e3e3e3" stroke-width="1.15"/><text transform="translate(1637.77 1183.2) rotate(-90)" font-size="17.6" fill="#5b5b5b" text-anchor="end">Mar 3</text><line x1="1660.90" y1="965.5" x2="1660.90" y2="1177" stroke="#e3e3e3" stroke-width="1.15"/><text transform="translate(1667.80 1183.2) rotate(-90)" font-size="17.6" fill="#5b5b5b" text-anchor="end">Mar 5</text><line x1="1690.93" y1="965.5" x2="1690.93" y2="1177" stroke="#e3e3e3" stroke-width="1.15"/><text transform="translate(1697.83 1183.2) rotate(-90)" font-size="17.6" fill="#5b5b5b" text-anchor="end">Mar 7</text><line x1="1720.96" y1="965.5" x2="1720.96" y2="1177" stroke="#e3e3e3" stroke-width="1.15"/><text transform="translate(1727.86 1183.2) rotate(-90)" font-size="17.6" fill="#5b5b5b" text-anchor="end">Mar 9</text><line x1="1750.99" y1="965.5" x2="1750.99" y2="1177" stroke="#e3e3e3" stroke-width="1.15"/><text transform="translate(1757.89 1183.2) rotate(-90)" font-size="17.6" fill="#5b5b5b" text-anchor="end">Mar 11</text><polyline points="1360.5,992.8 1405.5,1018.3" fill="none" stroke="#5f6dcf" stroke-width="2.7"/><polyline points="1360.5,1066.2 1405.5,1063" fill="none" stroke="#3f51b5" stroke-width="2.7"/><circle cx="1360.5" cy="992.8" r="5.8" fill="#5f6dcf"/><circle cx="1405.5" cy="1018.3" r="5.8" fill="#5f6dcf"/><circle cx="1360.5" cy="1066.2" r="5.8" fill="#3f51b5"/><circle cx="1405.5" cy="1063" r="5.8" fill="#3f51b5"/><rect x="901.8" y="1262" width="17.4" height="17.4" fill="#3f51b5"/><text x="927.6" y="1279.6" font-size="22.4" fill="#575757" stroke="#575757" stroke-width="0.3">Completion Tokens</text><rect x="1147.6" y="1262.3" width="17.6" height="17.4" fill="#5f6dcf"/><text x="1172.4" y="1279.6" font-size="22.2" fill="#575757" stroke="#575757" stroke-width="0.3">Prompt Tokens</text><path d="M2184.60 953.20 A107.2 107.2 0 1 1 2084.32 1022.51 L2132.68 1040.78 A55.5 55.5 0 1 0 2184.60 1004.90 Z" fill="#3f51b5" stroke="#fff" stroke-width="1.8" stroke-linejoin="miter"/><path d="M2084.32 1022.51 A107.2 107.2 0 0 1 2140.00 962.92 L2161.51 1009.93 A55.5 55.5 0 0 0 2132.68 1040.78 Z" fill="#5f6dcf" stroke="#fff" stroke-width="1.8" stroke-linejoin="miter"/><path d="M2140.00 962.92 A107.2 107.2 0 0 1 2184.60 953.20 L2184.60 1004.90 A55.5 55.5 0 0 0 2161.51 1009.93 Z" fill="#5f6dcf" stroke="#fff" stroke-width="1.8" stroke-linejoin="miter"/><rect x="2020.7" y="1189.4" width="17.8" height="17.8" fill="#3f51b5"/><text x="2046.4" y="1206" font-size="21.9" fill="#575757" stroke="#575757" stroke-width="0.3">80.75% AIAPI</text><rect x="2210.6" y="1189.4" width="17.8" height="17.8" fill="#5f6dcf"/><text x="2236.7" y="1206" font-size="20.9" fill="#575757" stroke="#575757" stroke-width="0.3">12.42% DEFAULT</text><rect x="2097" y="1238" width="17.6" height="17.6" fill="#5f6dcf"/><text x="2122" y="1254.6" font-size="21" fill="#575757" stroke="#575757" stroke-width="0.3">6.83% EXISTING_API</text></svg>
</div></body></html>
